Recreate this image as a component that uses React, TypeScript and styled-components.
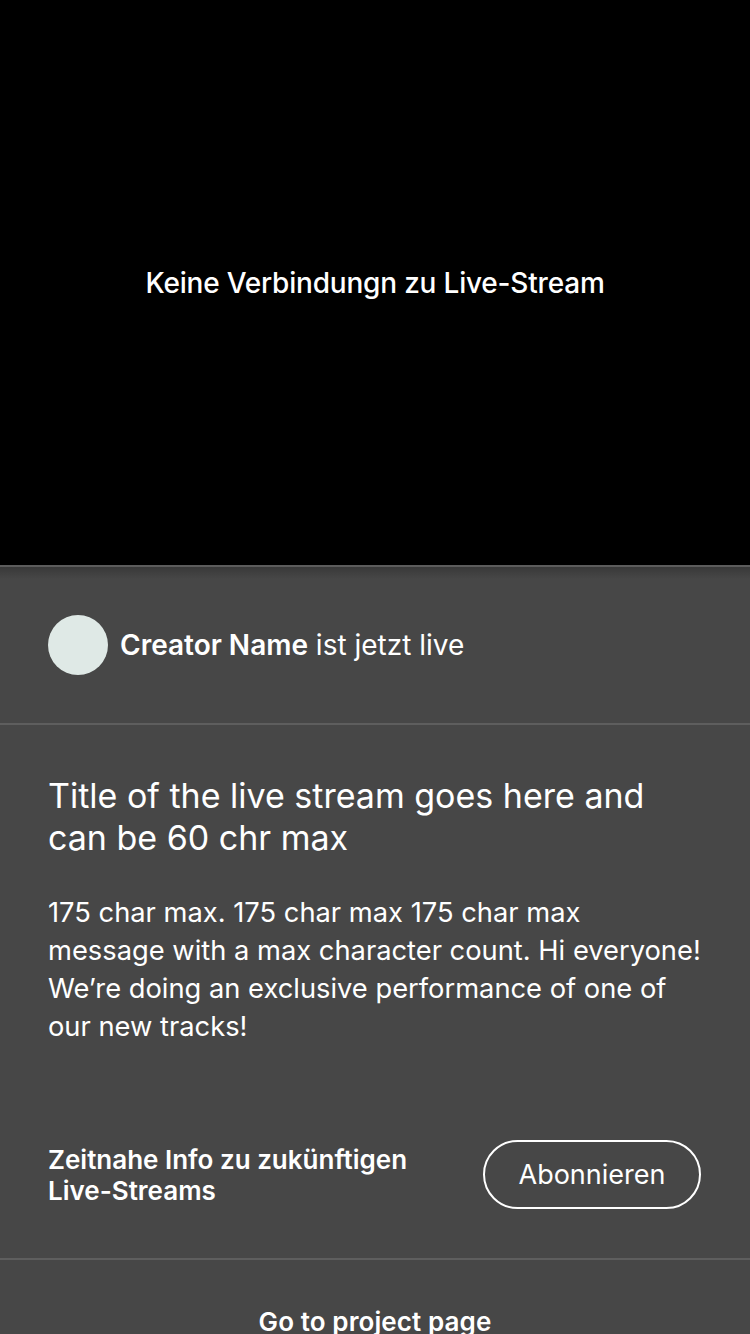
import React from "react";
import styled, { createGlobalStyle } from "styled-components";

const GlobalStyle = createGlobalStyle`
  html, body {
    margin: 0;
    padding: 0;
    background: #474747;
  }
  body {
    font-family: Inter, "Noto Sans", sans-serif;
    -webkit-font-smoothing: antialiased;
  }
`;

const descriptionLines = [
  "175 char max. 175 char max 175 char max",
  "message with a max character count. Hi everyone!",
  "We’re doing an exclusive performance of one of",
  "our new tracks!",
];

const Screen = styled.div`
  width: 750px;
  height: 1334px;
  overflow: hidden;
  display: flex;
  flex-direction: column;
  background: #474747;
  color: #ffffff;
`;

const Video = styled.div`
  height: 565px;
  flex-shrink: 0;
  background: #000000;
  display: flex;
  align-items: center;
  justify-content: center;
`;

const VideoMessage = styled.span`
  font-size: 28px;
  font-weight: 500;
  letter-spacing: -0.2px;
`;

const Panel = styled.div`
  border-top: 2px solid #5c5c5c;
  background: linear-gradient(to bottom, #393939 0px, #474747 12px);
  display: flex;
  flex-direction: column;
`;

const CreatorRow = styled.div`
  height: 156px;
  padding: 0 48px;
  display: flex;
  align-items: center;
  gap: 12px;
`;

const Avatar = styled.div`
  width: 60px;
  height: 60px;
  border-radius: 50%;
  background: #dfe9e6;
`;

const CreatorText = styled.span`
  font-size: 28px;
  font-weight: 400;
  b {
    font-weight: 600;
  }
`;

const Divider = styled.div`
  height: 2px;
  background: #5e5e5e;
`;

const Details = styled.div`
  padding: 50px 48px 49px;
  display: flex;
  flex-direction: column;
`;

const Title = styled.h1`
  margin: 0;
  font-size: 34px;
  line-height: 42px;
  font-weight: 400;
`;

const Description = styled.p`
  margin: 35px 0 0;
  font-size: 27.3px;
  line-height: 38px;
  font-weight: 400;
`;

const DescriptionLine = styled.span`
  display: block;
  white-space: nowrap;
`;

const SubscribeRow = styled.div`
  margin-top: 94px;
  display: flex;
  align-items: center;
  justify-content: space-between;
`;

const SubscribeInfo = styled.span`
  font-size: 26px;
  line-height: 31px;
  font-weight: 600;
  max-width: 400px;
`;

const OutlineButton = styled.button`
  width: 218px;
  height: 69px;
  margin-right: 1px;
  box-sizing: border-box;
  border: 2px solid #ffffff;
  border-radius: 35px;
  background: transparent;
  color: #ffffff;
  font-family: inherit;
  font-size: 27px;
  font-weight: 400;
  cursor: pointer;
`;

const FooterLink = styled.a`
  display: block;
  padding-top: 47px;
  text-align: center;
  font-size: 26px;
  line-height: 30px;
  font-weight: 600;
  letter-spacing: 0.1px;
  color: #ffffff;
  text-decoration: none;
`;

export default function App() {
  return (
    <Screen>
      <GlobalStyle />
      <Video>
        <VideoMessage>Keine Verbindungn zu Live-Stream</VideoMessage>
      </Video>
      <Panel>
        <CreatorRow>
          <Avatar />
          <CreatorText>
            <b>Creator Name</b> ist jetzt live
          </CreatorText>
        </CreatorRow>
        <Divider />
        <Details>
          <Title>Title of the live stream goes here and can be 60 chr max</Title>
          <Description>
            {descriptionLines.map((line) => (
              <DescriptionLine key={line}>{line}</DescriptionLine>
            ))}
          </Description>
          <SubscribeRow>
            <SubscribeInfo>Zeitnahe Info zu zukünftigen Live-Streams</SubscribeInfo>
            <OutlineButton>Abonnieren</OutlineButton>
          </SubscribeRow>
        </Details>
        <Divider />
        <FooterLink href="#">Go to project page</FooterLink>
      </Panel>
    </Screen>
  );
}
